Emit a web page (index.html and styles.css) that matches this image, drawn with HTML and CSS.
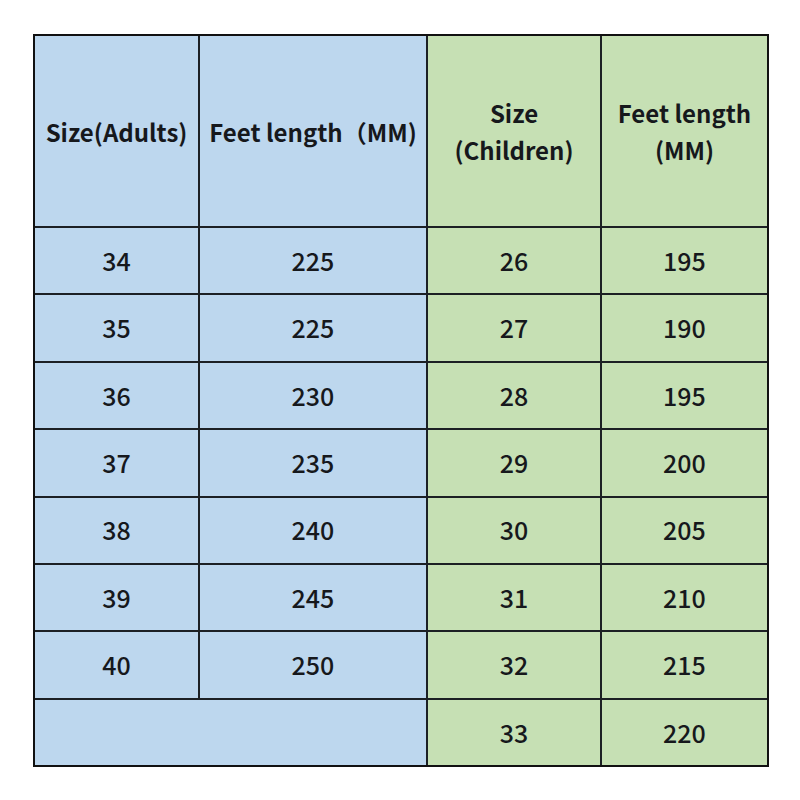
FILE: index.html
```html
<!DOCTYPE html>
<html>
<head>
<meta charset="utf-8">
<link rel="stylesheet" href="styles.css">
</head>
<body>
<div class="sheet">
  <div class="cell blue head">Size(Adults)</div>
  <div class="cell blue head">Feet length（MM)</div>
  <div class="cell green head">Size<br>(Children)</div>
  <div class="cell green head">Feet length<br>(MM)</div>

  <div class="cell blue">34</div><div class="cell blue">225</div><div class="cell green">26</div><div class="cell green">195</div>
  <div class="cell blue">35</div><div class="cell blue">225</div><div class="cell green">27</div><div class="cell green">190</div>
  <div class="cell blue">36</div><div class="cell blue">230</div><div class="cell green">28</div><div class="cell green">195</div>
  <div class="cell blue">37</div><div class="cell blue">235</div><div class="cell green">29</div><div class="cell green">200</div>
  <div class="cell blue">38</div><div class="cell blue">240</div><div class="cell green">30</div><div class="cell green">205</div>
  <div class="cell blue">39</div><div class="cell blue">245</div><div class="cell green">31</div><div class="cell green">210</div>
  <div class="cell blue">40</div><div class="cell blue">250</div><div class="cell green">32</div><div class="cell green">215</div>
  <div class="cell blue span2"></div><div class="cell green">33</div><div class="cell green">220</div>
</div>
</body>
</html>
```

FILE: styles.css
```css
html, body {
  margin: 0;
  padding: 0;
  background: #ffffff;
}
body {
  padding: 34px 0 0 33px;
}
.sheet {
  width: 736px;
  height: 733px;
  box-sizing: border-box;
  background: #1c2024;
  border: 2px solid #111;
  display: grid;
  grid-template-columns: 163px 226px 172px 165px;
  grid-template-rows: 190px repeat(8, 1fr);
  gap: 2px;
  font-family: "Noto Sans CJK SC", "Noto Sans", sans-serif;
  font-size: 25px;
  font-weight: 500;
  color: #16181c;
}
.cell {
  display: flex;
  align-items: center;
  justify-content: center;
  text-align: center;
  line-height: 1.5;
}
.head {
  font-weight: 700;
  font-size: 24px;
  line-height: 37px;
}
.blue {
  background: #bdd7ee;
}
.green {
  background: #c6e0b4;
}
.span2 {
  grid-column: span 2;
}
```
